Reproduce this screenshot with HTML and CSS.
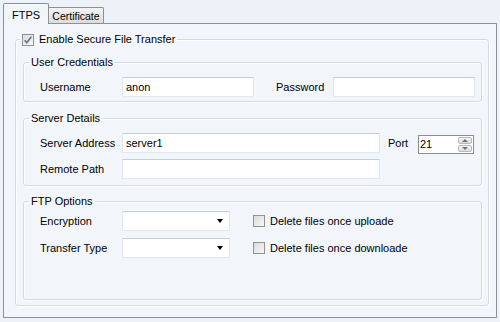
FILE: index.html
```html
<!DOCTYPE html>
<html lang="en">
  <head>
    <meta charset="UTF-8" />
    <title>FTPS Settings</title>
    <link rel="stylesheet" href="styles.css">
  </head>
  <body>
    <div class="tabs">
      <div class="tab tab-active">FTPS</div>
      <div class="tab tab-cert">Certificate</div>
    </div>
    <div class="panel">
      <fieldset class="group outer">
        <legend class="outer-legend">
          <span class="checkbox">
            <svg width="12" height="12" viewBox="0 0 12 12">
              <path d="M2.6 6.2 L4.8 8.6 L9.4 2.8" fill="none" stroke="#6f7b88" stroke-width="1.7"/>
            </svg>
          </span>
          Enable Secure File Transfer
        </legend>

        <fieldset class="group creds">
          <legend>User Credentials</legend>
          <div class="row">
            <span class="label">Username</span>
            <div class="field w-user">anon</div>
            <span class="label lbl-pass">Password</span>
            <div class="field w-pass"></div>
          </div>
        </fieldset>

        <fieldset class="group server">
          <legend>Server Details</legend>
          <div class="row">
            <span class="label">Server Address</span>
            <div class="field w-addr">server1</div>
            <span class="label lbl-port">Port</span>
            <div class="spinner">
              <span class="spin-value">21</span>
              <div class="spin-buttons">
                <span class="spin-btn"><span class="tri-up"></span></span>
                <span class="spin-btn"><span class="tri-down"></span></span>
              </div>
            </div>
          </div>
          <div class="row">
            <span class="label">Remote Path</span>
            <div class="field w-addr"></div>
          </div>
        </fieldset>

        <fieldset class="group options">
          <legend>FTP Options</legend>
          <div class="row">
            <span class="label">Encryption</span>
            <div class="field combo"><span class="arrow"></span></div>
            <span class="checkbox opt-check"></span>
            <span class="check-text">Delete files once uploade</span>
          </div>
          <div class="row">
            <span class="label">Transfer Type</span>
            <div class="field combo"><span class="arrow"></span></div>
            <span class="checkbox opt-check"></span>
            <span class="check-text">Delete files once downloade</span>
          </div>
        </fieldset>
      </fieldset>
    </div>
  </body>
</html>
```

FILE: styles.css
```css
body {
  margin: 0;
  background: #edf2f9;
  font-family: "Liberation Sans", Arial, sans-serif;
  font-size: 11px;
  color: #000;
}
.tabs {
  display: flex;
  align-items: flex-end;
  height: 20px;
  padding: 3px 0 0 3px;
}
.tab {
  box-sizing: border-box;
  border: 1px solid #8d9096;
  border-bottom: none;
  text-align: center;
}
.tab-active {
  position: relative;
  z-index: 1;
  width: 46px;
  height: 21px;
  margin-bottom: -1px;
  padding-top: 5px;
  background: #f2f6fb;
  border-radius: 2px 2px 0 0;
}
.tab-cert {
  width: 55px;
  height: 16px;
  margin-left: 0;
  padding-top: 2px;
  font-size: 10.5px;
  border-left: none;
  background: linear-gradient(#f3f3f3, #dcdcdc);
  border-radius: 0 2px 0 0;
}
.panel {
  box-sizing: border-box;
  height: 295px;
  margin: 0 3px 0 3px;
  padding: 9px 7px 0 11px;
  background: #f2f6fb;
  border: 1px solid #8d9096;
}
.group {
  margin: 0;
  border: 1px solid #d3dbe2;
  border-radius: 3px;
  box-shadow: inset 1px 1px 0 #fff, 1px 1px 0 #fff;
  min-width: 0;
}
.group legend {
  line-height: 13px;
  padding: 0 2px;
  margin-left: 0;
}
.outer {
  padding: 10px 6px 5px 7px;
}
.outer .outer-legend {
  display: flex;
  align-items: center;
  gap: 5px;
  margin-left: -3px;
}
.creds,
.server,
.options {
  padding: 8px 6px 4px 5px;
}
.creds {
  margin-bottom: 10px;
}
.server {
  margin-bottom: 9px;
  padding-bottom: 6px;
}
.options {
  padding-top: 3px;
  padding-bottom: 41px;
}
.row {
  display: flex;
  align-items: center;
  height: 20px;
  padding-left: 11px;
}
.server .row + .row {
  margin-top: 6px;
}
.options .row + .row {
  margin-top: 7px;
}
.label {
  width: 82px;
  flex: none;
}
.lbl-pass {
  width: 57px;
  margin-left: 22px;
}
.lbl-port {
  width: 30px;
  margin-left: 8px;
}
.field {
  box-sizing: border-box;
  height: 20px;
  padding: 0 3px;
  display: flex;
  align-items: center;
  background: #fff;
  border: 1px solid #e2e7ec;
  border-top-color: #c9ced4;
  flex: none;
}
.w-user {
  width: 132px;
}
.w-pass {
  width: 142px;
}
.w-addr {
  width: 258px;
}
.combo {
  width: 108px;
  justify-content: flex-end;
  padding-right: 6px;
}
.arrow {
  width: 0;
  height: 0;
  border-left: 3.5px solid transparent;
  border-right: 3.5px solid transparent;
  border-top: 4px solid #000;
}
.spinner {
  box-sizing: border-box;
  width: 56px;
  height: 19px;
  margin-top: 2px;
  display: flex;
  align-items: stretch;
  background: #fff;
  border: 1px solid #8a8e94;
}
.spin-value {
  flex: 1;
  padding-left: 1px;
  line-height: 17px;
}
.spin-buttons {
  width: 14px;
  display: flex;
  flex-direction: column;
  padding: 1px 1px 1px 0;
  gap: 1px;
}
.spin-btn {
  flex: 1;
  display: flex;
  align-items: center;
  justify-content: center;
  border: 1px solid #b4b8bd;
  border-radius: 2px;
  background: linear-gradient(#f6f6f6, #dedede);
}
.tri-up,
.tri-down {
  width: 0;
  height: 0;
  border-left: 3px solid transparent;
  border-right: 3px solid transparent;
}
.tri-up {
  border-bottom: 3px solid #6b6f75;
}
.tri-down {
  border-top: 3px solid #6b6f75;
}
.checkbox {
  box-sizing: border-box;
  width: 12px;
  height: 12px;
  flex: none;
  display: inline-flex;
  border: 1px solid #8f9297;
  background: linear-gradient(135deg, #dcdcdc, #f6f6f6);
}
.checkbox svg {
  margin: -1px;
}
.opt-check {
  margin-left: 23px;
  margin-right: 5px;
}
.check-text {
  white-space: nowrap;
}
```
